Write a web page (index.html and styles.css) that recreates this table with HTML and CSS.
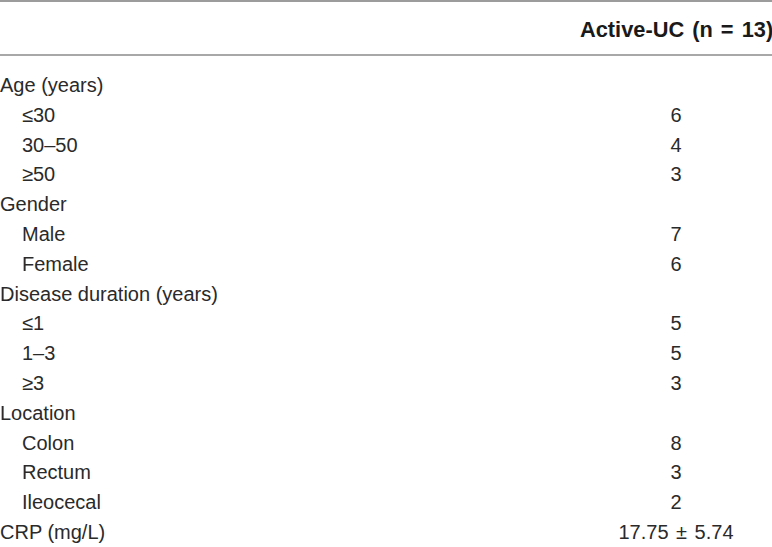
FILE: index.html
```html
<!DOCTYPE html>
<html lang="en">
<head>
<meta charset="utf-8">
<title>Active-UC characteristics</title>
<link rel="stylesheet" href="styles.css">
</head>
<body>
<div class="table">
  <div class="head">
    <div class="cell-label"></div>
    <div class="cell-value head-title">Active-UC (n = 13)</div>
  </div>
  <div class="body">
    <div class="row"><div class="cell-label">Age (years)</div><div class="cell-value"></div></div>
    <div class="row sub"><div class="cell-label">≤30</div><div class="cell-value">6</div></div>
    <div class="row sub"><div class="cell-label">30–50</div><div class="cell-value">4</div></div>
    <div class="row sub"><div class="cell-label">≥50</div><div class="cell-value">3</div></div>
    <div class="row"><div class="cell-label">Gender</div><div class="cell-value"></div></div>
    <div class="row sub"><div class="cell-label">Male</div><div class="cell-value">7</div></div>
    <div class="row sub"><div class="cell-label">Female</div><div class="cell-value">6</div></div>
    <div class="row"><div class="cell-label">Disease duration (years)</div><div class="cell-value"></div></div>
    <div class="row sub"><div class="cell-label">≤1</div><div class="cell-value">5</div></div>
    <div class="row sub"><div class="cell-label">1–3</div><div class="cell-value">5</div></div>
    <div class="row sub"><div class="cell-label">≥3</div><div class="cell-value">3</div></div>
    <div class="row"><div class="cell-label">Location</div><div class="cell-value"></div></div>
    <div class="row sub"><div class="cell-label">Colon</div><div class="cell-value">8</div></div>
    <div class="row sub"><div class="cell-label">Rectum</div><div class="cell-value">3</div></div>
    <div class="row sub"><div class="cell-label">Ileocecal</div><div class="cell-value">2</div></div>
    <div class="row"><div class="cell-label">CRP (mg/L)</div><div class="cell-value">17.75 ± 5.74</div></div>
  </div>
</div>
</body>
</html>
```

FILE: styles.css
```css
html, body {
  margin: 0;
  padding: 0;
  background: #ffffff;
}

body {
  font-family: "Liberation Sans", Arial, sans-serif;
  color: #2a2a2a;
  font-size: 20px;
}

.table {
  width: 772px;
}

.head {
  display: grid;
  grid-template-columns: 1fr 192px;
  align-items: center;
  border-top: 2px solid #9c9c9c;
  border-bottom: 2px solid #a8a8a8;
  height: 56px;
  box-sizing: border-box;
  padding-top: 4px;
}

.head-title {
  font-weight: bold;
  font-size: 21.8px;
  color: #1a1a1a;
}

.body {
  padding-top: 15px;
}

.row {
  display: grid;
  grid-template-columns: 1fr 192px;
  align-items: center;
  height: 29.8px;
  line-height: 29.8px;
}

.cell-label {
  white-space: nowrap;
}

.sub .cell-label {
  padding-left: 22px;
}

.cell-value {
  text-align: center;
  white-space: nowrap;
  word-spacing: 2px;
}
```
